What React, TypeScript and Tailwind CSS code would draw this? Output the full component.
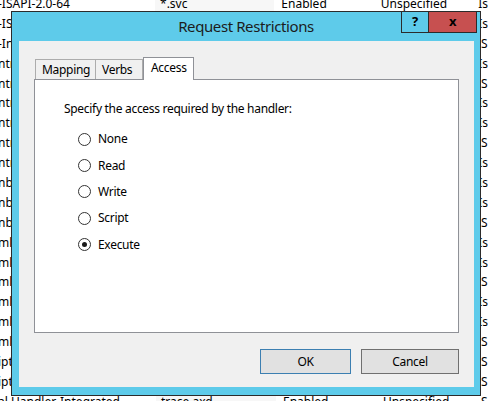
const rows: string[][] = [
  ['-ISAPI-2.0-64', '*.svc', 'Enabled', 'Unspecified', 'Is'],
  ['-ISAPI-4.0_32bit', '*.svc', 'Enabled', 'Unspecified', 'Is'],
  ['-Integrated', '*.svc', 'Enabled', 'Unspecified', 'S'],
  ['ntrl-ISAPI-4.0', '*.rem', 'Enabled', 'Unspecified', 'Is'],
  ['ntrl-ISAPI-4.0', '*.rem', 'Enabled', 'Unspecified', 'S'],
  ['ntrl-ISAPI-2.0', '*.rem', 'Enabled', 'Unspecified', 'Is'],
  ['ntrl-ISAPI-2.0', '*.soap', 'Enabled', 'Unspecified', 'Is'],
  ['ntrl-Integrated', '*.soap', 'Enabled', 'Unspecified', 'S'],
  ['ntrl-Integrated', '*.soap', 'Enabled', 'Unspecified', 'Is'],
  ['nbx-ISAPI-4.0', '*.xamlx', 'Enabled', 'Unspecified', 'Is'],
  ['nbx-ISAPI-4.0', '*.xamlx', 'Enabled', 'Unspecified', 'Is'],
  ['nbx-Integrated', '*.xamlx', 'Enabled', 'Unspecified', 'S'],
  ['ml-ISAPI-4.0', '*.xoml', 'Enabled', 'Unspecified', 'Is'],
  ['ml-ISAPI-4.0', '*.xoml', 'Enabled', 'Unspecified', 'Is'],
  ['ml-Integrated', '*.xoml', 'Enabled', 'Unspecified', 'S'],
  ['ml-ISAPI-2.0', '*.xoml', 'Enabled', 'Unspecified', 'Is'],
  ['ml-ISAPI-2.0', '*.xoml', 'Enabled', 'Unspecified', 'Is'],
  ['ml-Integrated', '*.xoml', 'Enabled', 'Unspecified', 'S'],
  ['ipt-ISAPI-4.0', '*.asmx', 'Enabled', 'Unspecified', 'S'],
  ['ipt-Integrated', '*.asmx', 'Enabled', 'Unspecified', 'S'],
  ['al Handler-Integrated', 'trace.axd', 'Enabled', 'Unspecified', 'S'],
];

const access = ['None', 'Read', 'Write', 'Script', 'Execute'];

function Radio({ label, checked }: { label: string; checked?: boolean }) {
  return (
    <div className="flex items-center h-[26.4px]">
      <span className="w-[13px] h-[13px] rounded-full border border-[#333] bg-white flex items-center justify-center">
        {checked && <span className="w-[5px] h-[5px] rounded-full bg-[#1a1a1a]" />}
      </span>
      <span className="ml-[7px]">{label}</span>
    </div>
  );
}

function Dialog() {
  return (
    <div className="absolute left-[11px] top-[11px] w-[470px] h-[385px] border border-[#2b2b2b] bg-[#5ecbea] flex flex-col tracking-[-0.3px]">
      <div className="relative h-[29px]">
        <div className="h-full flex items-center justify-center text-[15px] text-[#1c1c1c] tracking-[-0.4px]">
          Request Restrictions
        </div>
        <div className="absolute -top-px right-[3px] flex h-[22px] border border-[#2b2b2b]">
          <div className="w-[27px] flex items-center justify-center border-r border-[#2b2b2b] text-[13px] font-bold">?</div>
          <div className="w-[47px] flex items-center justify-center bg-[#c75050] text-[13px] font-bold">x</div>
        </div>
      </div>
      <div className="ml-[7px] mr-[6px] h-[346px] bg-[#f0f0f0] pt-[16px] px-[15px] flex flex-col">
        <div className="flex items-end h-[22px] pl-px">
          <div className="w-[61px] h-[20px] border border-b-0 border-[#acacac] pl-[6px] leading-[19px]">Mapping</div>
          <div className="w-[47px] h-[20px] border-t border-r border-[#acacac] pl-[6px] leading-[19px]">Verbs</div>
          <div className="relative z-10 w-[51px] h-[23px] -mb-px border border-b-0 border-[#8f9197] bg-white pl-[7px] leading-[20px]">Access</div>
        </div>
        <div className="w-[425px] h-[254px] border border-[#8f9197] bg-white pl-[29px] pt-[21px]">
          <div className="leading-[16px]">Specify the access required by the handler:</div>
          <div className="mt-[9px] ml-[14px] flex flex-col">
            {access.map((a) => (
              <Radio key={a} label={a} checked={a === 'Execute'} />
            ))}
          </div>
        </div>
        <div className="flex justify-end gap-[10px] mt-[16px]">
          <button className="w-[91px] h-[25px] border border-[#3c7fb1] bg-[#e1e1e1]">OK</button>
          <button className="w-[98px] h-[25px] border border-[#707070] bg-[#e1e1e1]">Cancel</button>
        </div>
      </div>
    </div>
  );
}

export default function App() {
  return (
    <div className="relative w-[488px] h-[401px] overflow-hidden bg-white text-[12px] text-black font-['Noto_Sans',sans-serif]">
      <div className="-mt-[6px]">
        {rows.map((r, i) => (
          <div key={i} className="flex h-[19.9px] items-center whitespace-nowrap">
            <div className="w-[158px] -ml-[2px] overflow-hidden">{r[0]}</div>
            <div className="w-[120px] h-full flex items-center bg-[#f7f7f7] pl-[5px]">{r[1]}</div>
            <div className="w-[100px] pl-[7px]">{r[2]}</div>
            <div className="w-[100px] pl-[7px]">{r[3]}</div>
            <div className="pl-[5px]">{r[4]}</div>
          </div>
        ))}
      </div>
      <Dialog />
    </div>
  );
}
